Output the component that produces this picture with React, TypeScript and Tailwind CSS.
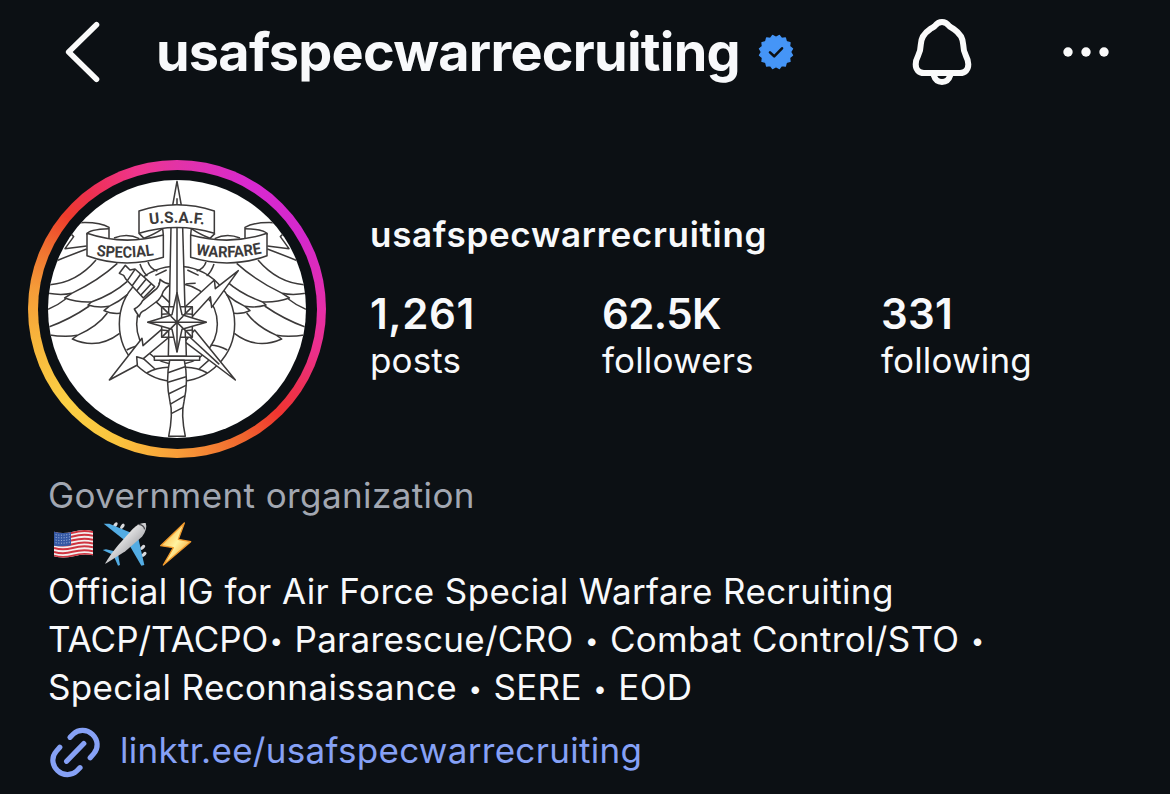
const stats = [
  { value: '1,261', label: 'posts', width: 'w-[232px]', tracking: 'tracking-[0.6px]' },
  { value: '62.5K', label: 'followers', width: 'w-[279px]', tracking: 'tracking-[-0.6px]' },
  { value: '331', label: 'following', width: 'w-[200px]', tracking: 'tracking-[0.3px]' },
];

const badgePoints = Array.from({ length: 32 }, (_, i) => {
  const r = i % 2 === 0 ? 16.8 : 14.6;
  const a = (Math.PI * (i + 1)) / 16;
  return `${(18 + r * Math.sin(a)).toFixed(2)},${(18 - r * Math.cos(a)).toFixed(2)}`;
}).join(' ');

function BackIcon() {
  return (
    <svg width="40" height="64" viewBox="62 20 40 64" fill="none" stroke="#fafafa" strokeWidth="5.6" strokeLinecap="round" strokeLinejoin="round">
      <path d="M96.5 24.8 L68.7 52 L96.5 79.2" />
    </svg>
  );
}

function VerifiedBadge() {
  return (
    <svg width="36" height="36" viewBox="0 0 36 36">
      <polygon points={badgePoints} fill="#4595f7" stroke="#4595f7" strokeWidth="1.4" strokeLinejoin="round" />
      <path d="M12 18.4 L16.2 22.3 L24 14.3" fill="none" stroke="#0c1014" strokeWidth="2.6" strokeLinecap="round" strokeLinejoin="round" />
    </svg>
  );
}

function BellIcon() {
  return (
    <svg width="62" height="70" viewBox="911 17 62 70" fill="none" stroke="#fafafa" strokeWidth="6" strokeLinejoin="round">
      <path d="M942 22 C938.5 22 936.5 23.8 934.8 26 C933.6 27.4 932 27.8 930 29.2 C923.5 33.6 921 38.5 920.8 44.5 C920.7 49.5 919.8 52.5 918 56 C916.4 59 915.7 61.5 915.7 64.3 C915.7 69.5 918.7 73 924 73 L960 73 C965.3 73 968.3 69.5 968.3 64.3 C968.3 61.5 967.6 59 966 56 C964.2 52.5 963.3 49.5 963.2 44.5 C963 38.5 960.5 33.6 954 29.2 C952 27.8 950.4 27.4 949.2 26 C947.5 23.8 945.5 22 942 22 Z" />
      <path d="M933.6 75 C935 79.6 938 82 942 82 C946 82 949 79.6 950.4 75" />
    </svg>
  );
}

function MoreIcon() {
  return (
    <svg width="48" height="12" viewBox="0 0 48 12" fill="#fafafa">
      <circle cx="6" cy="6" r="4.7" />
      <circle cx="24" cy="6" r="4.7" />
      <circle cx="42" cy="6" r="4.7" />
    </svg>
  );
}

function LinkIcon() {
  return (
    <svg width="54" height="54" viewBox="48 726 54 54" fill="none" stroke="#86a1f6" strokeWidth="5.2" strokeLinecap="round">
      <path d="M70 737.3 L73.3 734 C78.5 729 87 729.2 92.4 734.4 C98.2 740 98.7 748 93.8 753.6 L90.2 757.8" />
      <path d="M80 767.7 L76.7 771 C71.5 776 63 775.8 57.6 770.6 C51.8 765 51.3 757 56.2 751.4 L59.8 747.2" />
      <path d="M83.8 743.5 L66.6 761.3" />
    </svg>
  );
}

// One wing with its banner; the right one is this mirrored
function Wing() {
  return (
    <g>
      <path d="M90 404 Q170 398 228 330" />
      <path d="M110 332 Q150 316 200 297" />
      <path d="M84 430 Q125 437 155 430 Q235 392 292 340" />
      <path d="M155 430 L134 444 Q172 458 214 456 Q280 432 322 394" />
      <path d="M84 478 Q112 467 137 447" />
      <path d="M214 456 L204 465 Q232 474 267 469 Q298 455 322 434" />
      <path d="M84 532 Q150 508 208 468" />
      <path d="M267 469 L252 482 Q272 492 300 490" />
      <path d="M84 554 Q135 563 172 556 Q232 530 262 489" />
      <path d="M172 556 L157 567 Q232 601 299 550" />
      <path d="M282 264 Q322 248 358 266" />
      <path d="M162 219 Q235 213 267 232 L267 270" />
      <path d="M267 236 Q206 238 201 252 Q212 266 267 270" />
      <path d="M150 249 L161 260 L135 296 L200 288" />
      <path d="M384 336 Q390 356 412 363 M360 342 Q368 366 382 378 M406 376 L440 360 M415 400 Q430 400 445 402" />
      <path d="M357 250 L372 265 Q405 252 428 236 L430 255" />
      <path d="M201 250 Q312 288 430 255 L430 322 Q312 358 201 317 Z" fill="#fff" />
    </g>
  );
}

function Emblem() {
  return (
    <svg className="h-[258px] w-[258px]" viewBox="84 90 774 774" fill="none" stroke="#3c3a3a" strokeWidth="4.6" strokeLinejoin="round">
      <Wing />
      <g transform="translate(942 0) scale(-1 1)">
        <Wing />
      </g>

      {/* globe */}
      <circle cx="471" cy="522" r="173" clipPath="url(#below-banner)" />
      <circle cx="471" cy="522" r="121" />
      <clipPath id="below-banner">
        <rect x="280" y="346" width="390" height="360" />
      </clipPath>
      <path d="M320 600 Q345 586 370 585 M622 600 Q597 586 572 585 M366 622 L405 657 M576 622 L537 657 M380 669 Q410 653 445 652 M562 669 Q532 653 497 652" />

      {/* lightning bolt */}
      <path d="M655 362 L575 472 L571 440 L513 504 L485 480 L583 390 L586 416 Z" fill="#fff" />
      <path d="M268 690 L366 565 L369 587 L432 532 L455 555 L370 626 L350 620 L352 645 Z" fill="#fff" />

      {/* dagger */}
      <path d="M494 575 L646 690 L524 540 Z" fill="#fff" />
      <path d="M506 558 L598 643" />
      <path d="M400 448 L440 484 M420 430 L458 467" />
      <path d="M316 346 L330 360 L345 357 L404 410 L370 444 L318 388 L311 376 L298 370 Z" fill="#fff" />
      <path d="M345 358 L322 392 M362 372 L336 408 M378 388 L350 422 M393 402 L362 436" />
      <path d="M420 388 Q434 401 453 402 Q437 412 430 424 Q422 448 408 456 L376 480 Q360 485 358 501 Q347 484 343 477 Q360 468 368 452 L410 416 Q420 405 420 388 Z" fill="#fff" />

      {/* sword */}
      <path d="M453 232 L445 619 L499 619 L488 232 Z" fill="#fff" />
      <path d="M471 94 L458 166 L484 166 Z" fill="#fff" />
      <path d="M471 145 L471 166 M471 232 L471 430" />
      <rect x="403" y="619" width="136" height="12" fill="#fff" />
      <path d="M449 631 Q436 690 450 755 Q460 790 446 859 L496 859 Q482 790 492 755 Q506 690 493 631 Z" fill="#fff" />
      <path d="M444 668 L495 650 M444 697 L498 680 M445 732 L498 706 M450 763 L495 737 M455 790 L490 772" />

      {/* compass star */}
      <path d="M425 470 H517 V562 H425 Z" fill="#fff" />
      <path d="M425 470 L517 562 M517 470 L425 562" />
      <path d="M471 428 L486 494 L559 517 L486 538 L471 606 L456 538 L383 517 L456 494 Z" fill="#fff" />
      <path d="M471 428 V606 M383 517 H559 M452 498 L490 536 M490 498 L452 536 M446 470 L446 491 L425 493 M496 470 L496 491 L517 493 M446 562 L446 542 L425 540 M496 562 L496 542 L517 540" />

      {/* center banner */}
      <path d="M357 183 Q471 145 583 183 L583 250 Q471 215 357 250 Z" fill="#fff" />

      <path id="arc-usaf" d="M389 224 Q471 212 560 225" stroke="none" />
      <path id="arc-special" d="M229 317 Q315 330 410 314" stroke="none" />
      <path id="arc-warfare" d="M527 313 Q620 333 732 309" stroke="none" />
      <g fill="#3c3a3a" stroke="none" fontFamily="Roboto, 'Liberation Sans', sans-serif" fontWeight="700" fontSize="47">
        <text textLength="164" lengthAdjust="spacingAndGlyphs"><textPath href="#arc-usaf">U.S.A.F.</textPath></text>
        <text textLength="174" lengthAdjust="spacingAndGlyphs"><textPath href="#arc-special">SPECIAL</textPath></text>
        <text textLength="200" lengthAdjust="spacingAndGlyphs"><textPath href="#arc-warfare">WARFARE</textPath></text>
      </g>
    </svg>
  );
}

function Avatar() {
  return (
    <div className="flex h-[298px] w-[298px] shrink-0 items-center justify-center rounded-full bg-[conic-gradient(#e233a6_0deg,#d829d0_30deg,#d428cc_60deg,#e62fa8_90deg,#ec2f88_108deg,#ee3050_124deg,#f03530_136deg,#f0642e_152deg,#f79a38_178deg,#fbc53e_205deg,#fcd045_230deg,#f8b53c_258deg,#f59c38_278deg,#f07030_295deg,#ee3c2c_310deg,#ee3050_323deg,#f0348c_343deg,#e233a6_360deg)]">
      <div className="flex h-[279px] w-[279px] items-center justify-center rounded-full bg-[#0c1014]">
        <div className="h-[258px] w-[258px] overflow-hidden rounded-full bg-white">
          <Emblem />
        </div>
      </div>
    </div>
  );
}

function Emojis() {
  return (
    <svg width="146" height="50" viewBox="0 0 438 150">
      <defs>
        <linearGradient id="bolt" x1="0" y1="0" x2="1" y2="1">
          <stop offset="0.1" stopColor="#fbb03a" />
          <stop offset="0.5" stopColor="#fff3a0" />
          <stop offset="0.9" stopColor="#f59a23" />
        </linearGradient>
        <linearGradient id="fuselage" x1="0" y1="0" x2="1" y2="1">
          <stop offset="0.3" stopColor="#f4f4f4" />
          <stop offset="0.7" stopColor="#a9a9ad" />
        </linearGradient>
        <clipPath id="flag">
          <path d="M12 38 Q38 46 68 38 Q100 29 129 36 V109 Q100 103 72 112 Q38 120 12 112 Z" />
        </clipPath>
      </defs>
      <g clipPath="url(#flag)">
        <rect width="140" height="130" fill="#f3eeee" />
        <g fill="none" stroke="#cf3440" strokeWidth="6">
          <path d="M12 41 Q38 49 68 41 Q100 32 129 39" />
          <path d="M12 52.500 Q38 60.500 68 52.500 Q100 43.500 129 50.500" />
          <path d="M12 64 Q38 72 68 64 Q100 55 129 62" />
          <path d="M12 75.500 Q38 83.500 68 75.500 Q100 66.500 129 73.500" />
          <path d="M12 87 Q38 95 68 87 Q100 78 129 85" />
          <path d="M12 98.500 Q38 106.500 68 98.500 Q100 89.500 129 96.500" />
          <path d="M12 110 Q38 118 68 110 Q100 101 129 108" />
        </g>
        <path d="M12 36 Q38 44 63 38 V79 Q38 84 12 80 Z" fill="#3458a4" />
        <path d="M17 47 Q38 51 61 45 M17 55 Q38 59 61 53 M17 63 Q38 67 61 61 M17 71 Q38 75 61 69" fill="none" stroke="#c9d5ee" strokeWidth="2.500" strokeDasharray="3 5" />
      </g>
      <g fill="#d9d9dc">
        <ellipse cx="196" cy="18" rx="5" ry="9" transform="rotate(35 196 18)" />
        <ellipse cx="217" cy="22" rx="5" ry="9" transform="rotate(35 217 22)" />
        <ellipse cx="278" cy="85" rx="5" ry="9" transform="rotate(45 278 85)" />
        <ellipse cx="282" cy="106" rx="5" ry="9" transform="rotate(45 282 106)" />
      </g>
      <g fill="#53ace3">
        <path d="M161 14 L178 14 L250 44 L222 62 Z" />
        <path d="M240 82 L265 58 L283 138 L274 140 Z" />
        <path d="M158 93 L168 91 L200 98 L190 108 Z" />
        <path d="M190 108 L203 100 L210 138 L204 140 Z" />
      </g>
      <path d="M165 134 Q180 108 205 78 L248 30 Q268 9 287 12 Q294 30 276 53 L226 97 Q196 116 169 133 Z" fill="url(#fuselage)" />
      <path d="M266 16 Q282 18 284 31" fill="none" stroke="#4a4a50" strokeWidth="4" />
      <path d="M403 12 L332 80 L370 86 L340 138 L422 68 L385 61 Z" fill="url(#bolt)" stroke="#f29a2c" strokeWidth="4" strokeLinejoin="round" />
    </svg>
  );
}

function Bullet() {
  return <span className="inline-block w-4 text-center align-[3px] text-[24px] leading-none tracking-normal">•</span>;
}

export default function App() {
  return (
    <div className="flex h-[794px] w-[1170px] flex-col overflow-hidden bg-[#0c1014] font-['Inter','Liberation_Sans',sans-serif] text-[#f8f9fb]">
      <header className="flex h-[104px] shrink-0 items-center pl-[62px] pr-[60px]">
        <BackIcon />
        <h1 className="ml-[54px] w-[584px] whitespace-nowrap text-[54px] font-bold leading-[64px] tracking-[-0.75px]">usafspecwarrecruiting</h1>
        <div className="ml-[18px]">
          <VerifiedBadge />
        </div>
        <div className="ml-auto">
          <BellIcon />
        </div>
        <div className="ml-[89px]">
          <MoreIcon />
        </div>
      </header>

      <section className="flex pl-7 pt-14">
        <Avatar />
        <div className="ml-[44px] pt-[52px]">
          <h2 className="whitespace-nowrap text-[35px] font-semibold leading-[44px] tracking-[0.7px]">usafspecwarrecruiting</h2>
          <div className="mt-[34px] flex">
            {stats.map((s) => (
              <div key={s.label} className={s.width}>
                <div className={`text-[42px] font-semibold leading-[47px] ${s.tracking}`}>{s.value}</div>
                <div className="text-[35px] leading-[46px] tracking-[0.15px]">{s.label}</div>
              </div>
            ))}
          </div>
        </div>
      </section>

      <section className="whitespace-nowrap pl-[48px] pt-[13px] text-[35px] leading-[48px] tracking-[0.4px]">
        <p className="text-[#a2a7b1]">Government organization</p>
        <div className="ml-0.5 h-[48px]">
          <Emojis />
        </div>
        <p>Official IG for Air Force Special Warfare Recruiting</p>
        <p className="tracking-[0.3px]">
          <span className="tracking-normal">TACP/TACPO</span><Bullet /> Pararescue/CRO <Bullet /> Combat Control/STO <Bullet />
        </p>
        <p className="tracking-[0.35px]">Special Reconnaissance <Bullet /> SERE <Bullet /> EOD</p>
        <a className="mt-[15px] flex h-[54px] items-center tracking-[0.3px] text-[#86a1f6]">
          <LinkIcon />
          <span className="ml-[18px] pb-1.5">linktr.ee/usafspecwarrecruiting</span>
        </a>
      </section>
    </div>
  );
}
